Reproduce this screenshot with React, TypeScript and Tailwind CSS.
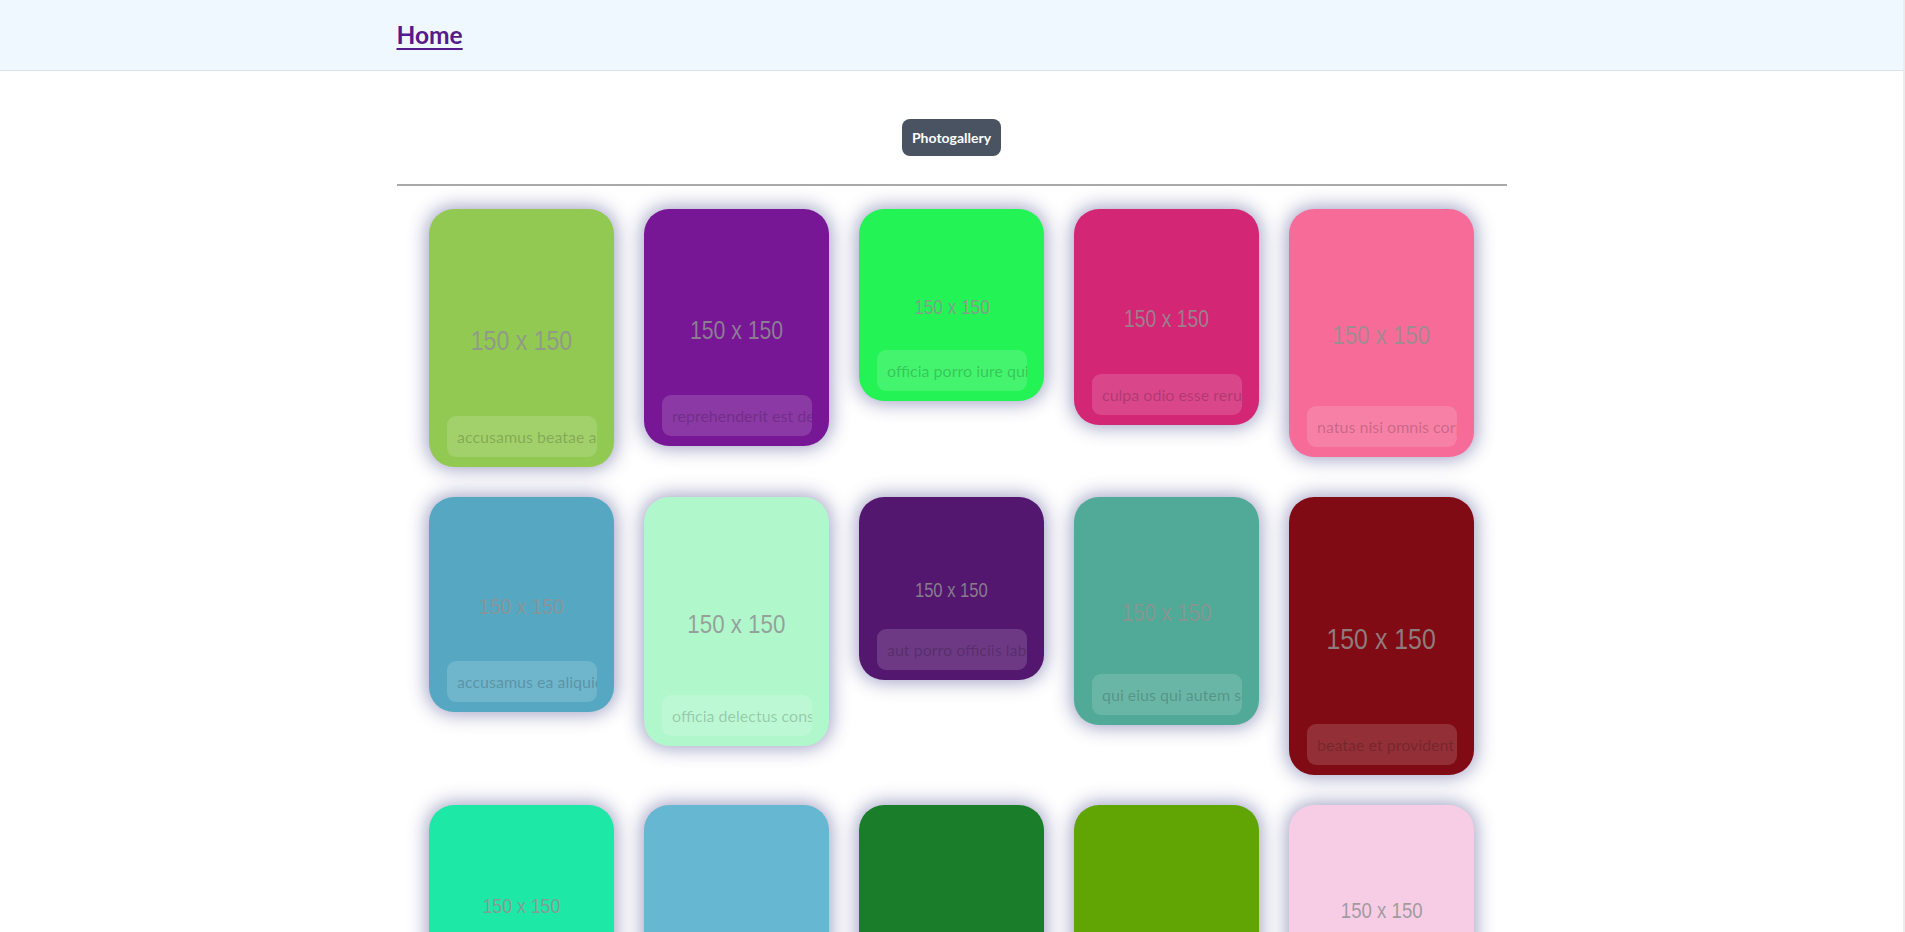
import React from "react";

type Photo = { color: string; title: string; h: number };

const photos: Photo[] = [
  { color: "#92c952", title: "accusamus beatae ad facilis cum similique qui sunt", h: 258 },
  { color: "#771796", title: "reprehenderit est deserunt velit ipsam", h: 237 },
  { color: "#24f355", title: "officia porro iure quia iusto qui ipsa ut modi", h: 192 },
  { color: "#d32776", title: "culpa odio esse rerum omnis laboriosam voluptate repudiandae", h: 216 },
  { color: "#f66b97", title: "natus nisi omnis corporis facere molestiae rerum in", h: 248 },
  { color: "#56a8c2", title: "accusamus ea aliquid et amet sequi nemo", h: 215 },
  { color: "#b0f7cc", title: "officia delectus consequatur vero aut veniam explicabo molestias", h: 249 },
  { color: "#54176f", title: "aut porro officiis laborum odit ea laudantium corporis", h: 183 },
  { color: "#51aa97", title: "qui eius qui autem sed", h: 228 },
  { color: "#810b14", title: "beatae et provident et ut vel", h: 278 },
  { color: "#1ee8a5", title: "nihil at amet non hic quia qui", h: 198 },
  { color: "#66b7d2", title: "mollitia soluta ut rerum eos aliquam consequatur perspiciatis maiores", h: 290 },
  { color: "#197d29", title: "repudiandae iusto deleniti rerum", h: 310 },
  { color: "#61a505", title: "est necessitatibus architecto ut laborum", h: 285 },
  { color: "#f7cde5", title: "harum dicta similique quis dolore earum ex qui", h: 208 },
];

function Card({ p }: { p: Photo }) {
  const s = Math.max(185, p.h) / 150;
  return (
    <div
      className="relative m-[15px] w-[185px] shrink-0 overflow-hidden rounded-[25px] shadow-[0_0_18px_3px_rgba(60,60,135,0.45)]"
      style={{ height: p.h, backgroundColor: p.color }}
    >
      <div className="absolute inset-0 flex items-center justify-center">
        <span
          className="whitespace-nowrap font-['Liberation_Sans',Arial,sans-serif] text-[rgba(145,145,145,0.85)]"
          style={{ fontSize: 16 * s, transform: `translateY(${1.6 * s}px) scaleX(0.84)` }}
        >
          150 x 150
        </span>
      </div>
      <div className="absolute bottom-[10px] left-[18px] h-[41px] w-[150px] overflow-hidden whitespace-nowrap rounded-[9px] bg-white/15 pl-[10px] text-[16px] leading-[41px] text-black/20">
        {p.title}
      </div>
    </div>
  );
}

export default function App() {
  return (
    <div className="flex h-[932px] w-full overflow-hidden bg-white font-['Lato','Noto_Sans',sans-serif]">
      <div className="min-w-0 flex-1">
        <header className="h-[71px] border-b border-[#d6e5f1] bg-[#f0f8ff]">
          <div className="mx-auto flex h-full max-w-[1140px] items-center px-[15px]">
            <a
              href="#"
              className="text-[24.5px] font-bold text-[#551a8b] underline decoration-[2px] underline-offset-[4px]"
            >
              Home
            </a>
          </div>
        </header>
        <main className="mx-auto max-w-[1140px] px-[15px]">
          <div className="flex justify-center pt-12">
            <button className="h-[37px] rounded-[8px] bg-[#4a5361] px-[10px] text-[14px] font-bold text-white">
              Photogallery
            </button>
          </div>
          <div className="mt-[28px] h-[2px] bg-[#a9a9a9]" />
          <div className="mt-2 flex flex-wrap items-start justify-center">
            {photos.map((p, i) => (
              <Card key={i} p={p} />
            ))}
          </div>
        </main>
      </div>
      <div className="w-[2px] shrink-0 bg-[#ececec]" />
    </div>
  );
}
